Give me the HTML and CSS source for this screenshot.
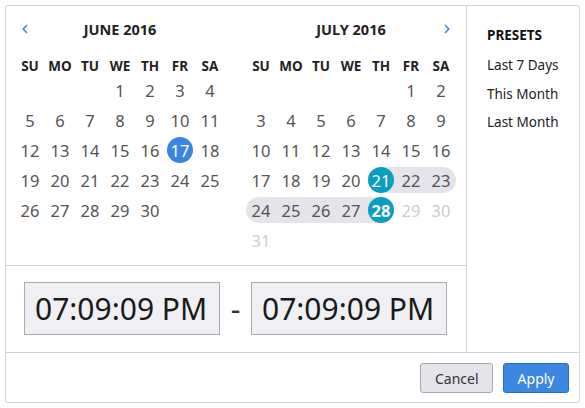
FILE: index.html
```html
<!DOCTYPE html>
<html>
<head>
<meta charset="utf-8">
<link rel="stylesheet" href="styles.css">
</head>
<body>
<div class="picker">
  <div class="body">
    <div class="main">
      <div class="calendars">
        <div class="month">
          <div class="month-head">
            <span class="nav prev"><svg width="6" height="10" viewBox="0 0 6 10"><path d="M5 1 L1.2 5 L5 9" fill="none" stroke="#3b86e0" stroke-width="1.5"/></svg></span>
            <div class="month-title">JUNE 2016</div>
            <span></span>
          </div>
          <div class="weekdays"><span>SU</span><span>MO</span><span>TU</span><span>WE</span><span>TH</span><span>FR</span><span>SA</span></div>
          <div class="days">
            <span class="day"></span><span class="day"></span><span class="day"></span>
            <span class="day">1</span><span class="day">2</span><span class="day">3</span><span class="day">4</span>
            <span class="day">5</span><span class="day">6</span><span class="day">7</span><span class="day">8</span><span class="day">9</span><span class="day">10</span><span class="day">11</span>
            <span class="day">12</span><span class="day">13</span><span class="day">14</span><span class="day">15</span><span class="day">16</span><span class="day"><span class="dot today">17</span></span><span class="day">18</span>
            <span class="day">19</span><span class="day">20</span><span class="day">21</span><span class="day">22</span><span class="day">23</span><span class="day">24</span><span class="day">25</span>
            <span class="day">26</span><span class="day">27</span><span class="day">28</span><span class="day">29</span><span class="day">30</span>
          </div>
        </div>
        <div class="month">
          <div class="month-head">
            <span></span>
            <div class="month-title">JULY 2016</div>
            <span class="nav next"><svg width="6" height="10" viewBox="0 0 6 10"><path d="M1 1 L4.8 5 L1 9" fill="none" stroke="#3b86e0" stroke-width="1.5"/></svg></span>
          </div>
          <div class="weekdays"><span>SU</span><span>MO</span><span>TU</span><span>WE</span><span>TH</span><span>FR</span><span>SA</span></div>
          <div class="days">
            <span class="day"></span><span class="day"></span><span class="day"></span><span class="day"></span><span class="day"></span>
            <span class="day">1</span><span class="day">2</span>
            <span class="day">3</span><span class="day">4</span><span class="day">5</span><span class="day">6</span><span class="day">7</span><span class="day">8</span><span class="day">9</span>
            <span class="day">10</span><span class="day">11</span><span class="day">12</span><span class="day">13</span><span class="day">14</span><span class="day">15</span><span class="day">16</span>
            <span class="day">17</span><span class="day">18</span><span class="day">19</span><span class="day">20</span><span class="day range-start"><span class="dot sel">21</span></span><span class="day in-range">22</span><span class="day in-range row-end">23</span>
            <span class="day in-range row-start">24</span><span class="day in-range">25</span><span class="day in-range">26</span><span class="day in-range">27</span><span class="day range-end"><span class="dot sel strong">28</span></span><span class="day muted">29</span><span class="day muted">30</span>
            <span class="day muted">31</span>
          </div>
        </div>
      </div>
      <div class="times">
        <div class="time-box">07:09:09 PM</div>
        <span class="dash">-</span>
        <div class="time-box">07:09:09 PM</div>
      </div>
    </div>
    <div class="presets">
      <div class="presets-title">PRESETS</div>
      <div class="preset">Last 7 Days</div>
      <div class="preset">This Month</div>
      <div class="preset">Last Month</div>
    </div>
  </div>
  <div class="footer">
    <button class="btn cancel">Cancel</button>
    <button class="btn apply">Apply</button>
  </div>
</div>
</body>
</html>
```

FILE: styles.css
```css
html, body {
  margin: 0;
  padding: 0;
  background: #fff;
}
body {
  font-family: "Noto Sans", "Open Sans", sans-serif;
}
.picker {
  margin: 5px;
  width: 575px;
  height: 398px;
  box-sizing: border-box;
  border: 1px solid #d3d3da;
  border-radius: 3px;
  display: flex;
  flex-direction: column;
}
.body {
  display: flex;
  height: 346px;
  border-bottom: 1px solid #d3d3da;
}
.main {
  width: 460px;
  border-right: 1px solid #d3d3da;
  display: flex;
  flex-direction: column;
}
.calendars {
  height: 260px;
  box-sizing: border-box;
  border-bottom: 1px solid #d3d3da;
  padding: 13px 0 0 9px;
  display: flex;
  gap: 21px;
}
.month {
  width: 210px;
}
.month-head {
  display: grid;
  grid-template-columns: 30px 1fr 30px;
  height: 20px;
  align-items: center;
}
.month-title {
  text-align: center;
  font-weight: 700;
  font-size: 14.5px;
  line-height: 20px;
  color: #222;
}
.nav {
  display: flex;
  align-items: center;
}
.nav.prev {
  justify-self: start;
  margin-left: 7px;
}
.nav.next {
  justify-self: end;
  margin-right: 6px;
}
.weekdays {
  margin-top: 18px;
  display: grid;
  grid-template-columns: repeat(7, 30px);
  height: 18px;
}
.weekdays span {
  text-align: center;
  font-weight: 700;
  font-size: 13.5px;
  line-height: 18px;
  color: #222;
}
.days {
  margin-top: 2px;
  display: grid;
  grid-template-columns: repeat(7, 30px);
  grid-auto-rows: 26px;
  row-gap: 4px;
}
.day {
  display: flex;
  align-items: center;
  justify-content: center;
  font-size: 16.5px;
  color: #555;
}
.day.muted {
  color: #ccccd4;
}
.dot {
  width: 26px;
  height: 26px;
  border-radius: 50%;
  display: flex;
  align-items: center;
  justify-content: center;
  color: #fff;
}
.dot.today {
  background: #3a85e1;
}
.dot.sel {
  background: #0b9ec1;
}
.dot.strong {
  font-weight: 700;
}
.in-range {
  background: #e5e4ea;
}
.row-start {
  border-radius: 13px 0 0 13px;
}
.row-end {
  border-radius: 0 13px 13px 0;
}
.range-start {
  background: linear-gradient(to right, transparent 50%, #e5e4ea 50%);
}
.range-end {
  background: linear-gradient(to right, #e5e4ea 50%, transparent 50%);
}
.times {
  flex: 1;
  display: flex;
  align-items: center;
  padding: 0 0 1px 18px;
  gap: 0;
}
.time-box {
  width: 196px;
  height: 53px;
  box-sizing: border-box;
  border: 1px solid #a9a9ae;
  background: #efeff4;
  font-size: 30px;
  line-height: 51px;
  padding-left: 10px;
  color: #1a1a1a;
  white-space: nowrap;
}
.dash {
  width: 31px;
  text-align: center;
  font-size: 30px;
  color: #333;
}
.presets {
  flex: 1;
  padding: 19px 0 0 20px;
}
.presets-title {
  font-weight: 700;
  font-size: 13.5px;
  line-height: 20px;
  color: #111;
  margin-bottom: 6px;
}
.preset {
  font-size: 13.5px;
  line-height: 28.5px;
  color: #222;
}
.footer {
  flex: 1;
  display: flex;
  justify-content: flex-end;
  align-items: flex-start;
  gap: 10px;
  padding: 10px 10px 0 0;
}
.btn {
  height: 30px;
  font-family: "Noto Sans", "Open Sans", sans-serif;
  font-size: 14px;
  padding: 0 13.5px;
  border-radius: 3px;
  margin: 0;
}
.cancel {
  background: #e4e4ea;
  border: 1px solid #a9a9b0;
  color: #333;
}
.apply {
  background: #3c87e2;
  border: 1px solid #2b6dc5;
  color: #fff;
}
```
